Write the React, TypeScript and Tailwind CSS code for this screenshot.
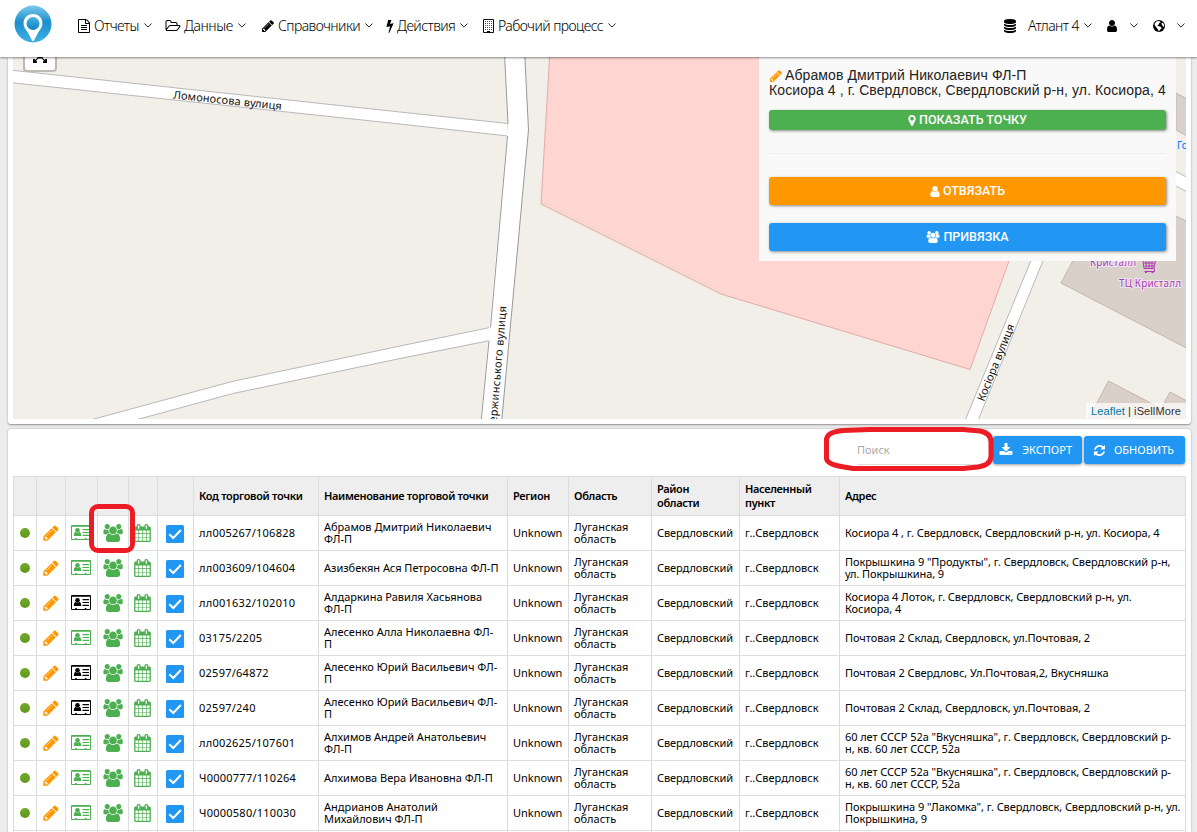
import React from "react";

type IconProps = { d: string; box?: string; className?: string };
const Icon = ({ d, box = "0 0 1792 1792", className = "" }: IconProps) => (
  <svg viewBox={box} className={"shrink-0 fill-current " + className}>
    <path d={d} />
  </svg>
);

const WIDE = "0 0 2048 1792";

const P = {
  file: "M1596 380q28 28 48 76t20 88v1152q0 40-28 68t-68 28h-1344q-40 0-68-28t-28-68v-1600q0-40 28-68t68-28h896q40 0 88 20t76 48zm-444-244v376h376q-10-29-22-41l-313-313q-12-12-41-22zm384 1528v-1024h-416q-40 0-68-28t-28-68v-416h-768v1536h1280zm-1024-864q0-14 9-23t23-9h704q14 0 23 9t9 23v64q0 14-9 23t-23 9h-704q-14 0-23-9t-9-23v-64zm736 224q14 0 23 9t9 23v64q0 14-9 23t-23 9h-704q-14 0-23-9t-9-23v-64q0-14 9-23t23-9h704zm0 256q14 0 23 9t9 23v64q0 14-9 23t-23 9h-704q-14 0-23-9t-9-23v-64q0-14 9-23t23-9h704z",
  folder: "M1845 931q0-35-53-35h-1088q-40 0-85.500 21.500t-71.500 52.500l-294 363q-18 24-18 40 0 35 53 35h1088q40 0 86-22t71-53l294-363q18-22 18-39zm-1141-163h768v-160q0-40-28-68t-68-28h-576q-40 0-68-28t-28-68v-64q0-40-28-68t-68-28h-320q-40 0-68 28t-28 68v853l256-315q44-53 116-87.500t140-34.500zm1269 163q0 62-46 120l-295 363q-43 53-116 87.500t-140 34.500h-1088q-92 0-158-66t-66-158v-960q0-92 66-158t158-66h320q92 0 158 66t66 158v32h544q92 0 158 66t66 158v160h192q54 0 99 24.500t67 70.500q15 32 15 68z",
  pencil: "M491 1536l91-91-235-235-91 91v107h128v128h107zm523-928q0-22-22-22-10 0-17 7l-542 542q-7 7-7 17 0 22 22 22 10 0 17-7l542-542q7-7 7-17zm-54-192l416 416-832 832h-416v-416zm683 96q0 53-37 90l-166 166-416-416 166-165q36-38 90-38 53 0 91 38l235 234q37 39 37 91z",
  bolt: "M1333 566q18 20 7 44l-540 1157q-13 25-42 25-4 0-14-2-17-5-25.500-19t-4.500-30l197-808-406 101q-4 1-12 1-18 0-31-11-18-15-13-39l201-825q4-14 16-23t28-9h328q19 0 32 12.500t13 29.500q0 8-5 18l-171 463 396-98q8-2 12-2 19 0 34 15z",
  database: "M896 768q237 0 443-43t325-127v170q0 69-103 128t-280 93.500-385 34.500-385-34.500-280-93.500-103-128v-170q119 84 325 127t443 43zm0 768q237 0 443-43t325-127v170q0 69-103 128t-280 93.500-385 34.500-385-34.500-280-93.500-103-128v-170q119 84 325 127t443 43zm0-384q237 0 443-43t325-127v170q0 69-103 128t-280 93.500-385 34.500-385-34.500-280-93.500-103-128v-170q119 84 325 127t443 43zm0-1152q208 0 385 34.500t280 93.500 103 128v128q0 69-103 128t-280 93.500-385 34.500-385-34.500-280-93.500-103-128v-128q0-69 103-128t280-93.500 385-34.500z",
  user: "M1536 1399q0 109-62.500 187t-150.500 78h-854q-88 0-150.500-78t-62.500-187q0-85 8.500-160.500t31.500-152 58.500-131 94-89 134.500-34.500q131 128 313 128t313-128q76 0 134.500 34.500t94 89 58.500 131 31.500 152 8.500 160.500zm-256-887q0 159-112.500 271.500t-271.500 112.500-271.500-112.500-112.500-271.500 112.500-271.500 271.500-112.500 271.500 112.500 112.500 271.500z",
  users: "M657 896q-162 5-265 128h-134q-82 0-138-40.500t-56-118.500q0-353 124-353 6 0 43.500 21t97.500 42.500 119 21.500q67 0 133-23-5 37-5 66 0 159 93 290zm1071 637q0 120-73 189.500t-194 69.500h-874q-121 0-194-69.500t-73-189.500q0-53 3.500-103.500t14-109 26.500-108.500 43-97.500 62-81 85.500-53.500 111.500-20q10 0 43 21.500t73 48 107 48 135 21.500 135-21.500 107-48 73-48 43-21.500q61 0 111.500 20t85.500 53.500 62 81 43 97.500 26.500 108.500 14 109 3.500 103.500zm-1024-1277q0 106-75 181t-181 75-181-75-75-181 75-181 181-75 181 75 75 181zm704 384q0 159-112.500 271.500t-271.500 112.500-271.500-112.500-112.500-271.500 112.500-271.500 271.500-112.500 271.500 112.500 112.500 271.500zm576 225q0 78-56 118.500t-138 40.500h-134q-103-123-265-128 93-131 93-290 0-29-5-66 66 23 133 23 59 0 119-21.500t97.500-42.500 43.500-21q124 0 124 353zm-128-609q0 106-75 181t-181 75-181-75-75-181 75-181 181-75 181 75 75 181z",
  calendar: "M192 1664h288v-288h-288v288zm352 0h320v-288h-320v288zm-352-352h288v-320h-288v320zm352 0h320v-320h-320v320zm-352-384h288v-288h-288v288zm736 736h320v-288h-320v288zm-384-736h320v-288h-320v288zm768 736h288v-288h-288v288zm-384-352h320v-320h-320v320zm-352-864v-288q0-13-9.500-22.500t-22.500-9.500h-64q-13 0-22.500 9.500t-9.500 22.500v288q0 13 9.500 22.500t22.500 9.500h64q13 0 22.500-9.500t9.500-22.500zm736 864h288v-320h-288v320zm-384-384h320v-288h-320v288zm384 0h288v-288h-288v288zm32-480v-288q0-13-9.500-22.500t-22.500-9.500h-64q-13 0-22.500 9.500t-9.500 22.500v288q0 13 9.500 22.500t22.500 9.500h64q13 0 22.500-9.500t9.500-22.500zm384-64v1280q0 52-38 90t-90 38h-1408q-52 0-90-38t-38-90v-1280q0-52 38-90t90-38h128v-96q0-66 47-113t113-47h64q66 0 113 47t47 113v96h384v-96q0-66 47-113t113-47h64q66 0 113 47t47 113v96h128q52 0 90 38t38 90z",
  refresh: "M1639 1056q0 5-1 7-64 268-268 434.500t-478 166.500q-146 0-282.500-55t-243.500-157l-129 129q-19 19-45 19t-45-19-19-45v-448q0-26 19-45t45-19h448q26 0 45 19t19 45-19 45l-137 137q71 66 161 102t187 36q134 0 250-65t186-179q11-17 53-117 8-23 30-23h192q13 0 22.500 9.500t9.500 22.500zm25-800v448q0 26-19 45t-45 19h-448q-26 0-45-19t-19-45 19-45l138-138q-148-137-349-137-134 0-250 65t-186 179q-11 17-53 117-8 23-30 23h-199q-13 0-22.500-9.500t-9.500-22.500v-7q65-268 270-434.500t480-166.500q146 0 284 55.500t245 156.500l130-129q19-19 45-19t45 19 19 45z",
  download: "M1344 1344q0-26-19-45t-45-19-45 19-19 45 19 45 45 19 45-19 19-45zm256 0q0-26-19-45t-45-19-45 19-19 45 19 45 45 19 45-19 19-45zm128-224v320q0 40-28 68t-68 28h-1472q-40 0-68-28t-28-68v-320q0-40 28-68t68-28h465l135 136q58 56 136 56t136-56l136-136h464q40 0 68 28t28 68zm-325-569q17 41-14 70l-448 448q-18 19-45 19t-45-19l-448-448q-31-29-14-70 17-39 59-39h256v-448q0-26 19-45t45-19h256q26 0 45 19t19 45v448h256q42 0 59 39z",
  marker: "M1152 640q0-106-75-181t-181-75-181 75-75 181 75 181 181 75 181-75 75-181zm256 0q0 109-33 179l-364 774q-16 33-47.500 52t-67.500 19-67.500-19-46.500-52l-365-774q-33-70-33-179 0-212 150-362t362-150 362 150 150 362z",
};

const Chevron = ({ className = "" }: { className?: string }) => (
  <svg viewBox="0 0 8 5" className={"h-[5px] w-2 shrink-0 fill-none stroke-[#222] stroke-1 " + className}>
    <path d="M.4.5 4 4.100 7.600.5" />
  </svg>
);

const Building = () => (
  <svg viewBox="0 0 11 14" className="h-[14px] w-[11px] shrink-0">
    <path fill="none" stroke="#111" d="M.5.500h10v13H.5z" />
    <path stroke="#555" strokeDasharray="1 1" d="M2 2.500h7M2 4.500h7M2 6.500h7M2 8.500h7M2 10.500h7" />
    <path d="M4 12h3v2H4z" />
  </svg>
);

const Globe = () => (
  <svg viewBox="0 0 24 24" className="size-3 shrink-0">
    <circle cx="12" cy="12" r="12" />
    <path fill="#fff" d="M7.500 2.500 13 1.800l2.500 2.700-3 1.200-.5 3-3.500 1.600 2 1.700 4.500 1.300 2.500 2.500-3 3-2.800 4.200-2-4.500-3.200-4L3 9.500l.8-3zM16.500 7l3.500-1.500 2.300 4.500-.5 4.500-3-3.300z" />
  </svg>
);

const Logo = () => (
  <svg viewBox="0 0 38 38" className="size-[38px] shrink-0">
    <defs>
      <linearGradient id="ring" x1="0" y1="0" x2="0" y2="1">
        <stop offset="0" stopColor="#7cc8ec" />
        <stop offset=".45" stopColor="#1b8fcd" />
        <stop offset="1" stopColor="#3fb0e6" />
      </linearGradient>
      <linearGradient id="core" x1="0" y1="0" x2="0" y2="1">
        <stop offset="0" stopColor="#4ab0e0" />
        <stop offset="1" stopColor="#0a84c6" />
      </linearGradient>
    </defs>
    <circle cx="19" cy="19" r="18.500" fill="url(#ring)" />
    <path fill="#fff" d="M19 9c-5.500 0-9.500 4.200-9.500 9.300 0 3.600 2 6.300 4.300 9.200L18 35.500q1 1.400 2 0l4.200-8c2.300-2.900 4.300-5.600 4.300-9.200C28.500 13.200 24.500 9 19 9z" />
    <circle cx="19" cy="18.500" r="6.500" fill="url(#core)" />
  </svg>
);

const IdCard = ({ className = "" }: { className?: string }) => (
  <svg viewBox="0 0 20 15" className={"h-[15px] w-5 fill-current " + className}>
    <path fillRule="evenodd" d="M1 0h18q1 0 1 1v13q0 1-1 1H1q-1 0-1-1V1q0-1 1-1zM1 1.700v12.300h3.200v-1h1.600v1h8v-1h1.600v1H19V1.700z" />
    <circle cx="6.500" cy="5.300" r="2.300" />
    <path d="M2.800 11q0-4 2-4 1.700 1 3.400 0 2 0 2 4zM11.500 4H18v1.200h-6.500zM11.500 6.900H18v1.200h-6.500zM11.500 9.800H18V11h-6.500z" />
  </svg>
);

const Check = () => (
  <svg viewBox="0 0 18 18" className="size-[18px]">
    <rect width="18" height="18" rx="1.500" fill="#2196f3" />
    <path d="m3.300 9.300 4 3.700 7.500-8" fill="none" stroke="#fff" strokeWidth="2" />
  </svg>
);

const NavItem = ({ icon, label, text = "" }: { icon: React.ReactNode; label: string; text?: string }) => (
  <div className="flex items-center">
    <span className="mr-[3px] flex">{icon}</span>
    <span className={"whitespace-nowrap " + text}>{label}</span>
    <Chevron className="ml-[5px]" />
  </div>
);

const Header = () => (
  <header className="relative z-10 flex h-[57px] shrink-0 items-center bg-white pb-[6px] font-['Noto_Sans',sans-serif] text-[14px] font-[350] tracking-[-0.57px] text-black shadow-[0_1px_2px_rgba(0,0,0,0.45)]">
    <div className="mt-[5px] ml-[14px] flex w-[63px] self-start">
      <Logo />
    </div>
    <nav className="flex">
      <div className="w-[88px]"><NavItem icon={<Icon d={P.file} className="h-[14px] w-[14px]" />} label="Отчеты" /></div>
      <div className="w-[96px]"><NavItem icon={<Icon d={P.folder} box={WIDE} className="h-[14px] w-4" />} label="Данные" text="tracking-[-0.45px]" /></div>
      <div className="w-[125px]"><NavItem icon={<Icon d={P.pencil} className="size-[14px]" />} label="Справочники" /></div>
      <div className="w-[97px]"><NavItem icon={<Icon d={P.bolt} box="448 0 896 1792" className="h-[14px] w-[8px]" />} label="Действия" /></div>
      <NavItem icon={<span className="mr-px flex"><Building /></span>} label="Рабочий процесс" />
    </nav>
    <div className="ml-auto flex items-center pr-[12px]">
      <Icon d={P.database} className="size-[14px]" />
      <span className="ml-[11px] whitespace-nowrap">Атлант 4</span>
      <Chevron className="ml-[5px]" />
      <Icon d={P.user} className="ml-[13px] size-[14px]" />
      <Chevron className="ml-[11px]" />
      <span className="ml-[15px]"><Globe /></span>
      <Chevron className="ml-[12px]" />
    </div>
  </header>
);

const MapDrawing = () => (
  <svg viewBox="13 57 1173 362" className="block h-[362px] w-[1173px] font-['Noto_Sans',sans-serif]">
    <rect x="13" y="57" width="1173" height="362" fill="#f2efe9" />
    <path d="M550 50 541 204 721 294 970 369.500 1014 247V50z" fill="#ffd5d1" stroke="#e3aaa8" />
    <g fill="#d9d0c9" stroke="#c4b6ab">
      <path d="M1083 242 1061 283 1200 355V228L1176 216z" />
      <path d="M1176 93 1200 106V143L1176 130z" />
      <path d="M1108.500 381 1080 435H1160L1164 410zM1170 392 1150 430H1200V408z" />
    </g>
    <path d="M1170 168.500 1200 184V198.500L1170 183z" fill="#fff" stroke="#bbb" />
    <g fill="#fff" stroke="#b8b8b8">
      <path d="M5 69.500 400 112 508 123.500V136L400 124 5 82z" />
      <path d="M495 326.500 400 346 232 381.500 85 421.500 130 421.500 233 393.500 400 358.500 495 339.500z" />
      <path d="M1048 219 964 423H977L1060 219z" />
    </g>
    <path d="M504 50 508 125 480.500 423H501.500L528.500 130 524.500 50z" fill="#fff" />
    <path d="M504.300 50 508 123.500M507.500 136 490.500 327.500M489 340.500 481 423M524.500 50 528.500 130 501.500 423" fill="none" stroke="#999" />
    <g fontSize="11" fill="#111">
      <text transform="translate(173 98.500) rotate(6)" textLength="109">Ломоносова вулиця</text>
      <text transform="translate(495.500 437) rotate(-85.200)" textLength="131">Дзержинського вулиця</text>
      <text transform="translate(984 402) rotate(-68)" textLength="82">Косіора вулиця</text>
    </g>
    <g fontSize="10" fill="#a03cac" stroke="#f2e6f0" strokeWidth="2" paintOrder="stroke">
      <text x="1090" y="265.500" textLength="46">Кристалл</text>
      <text x="1119" y="287" textLength="62">ТЦ Кристалл</text>
    </g>
    <text x="1177" y="149" fontSize="10" fill="#0078ff">Го</text>
    <path d="M1143 260.500h12.500l-1.700 8h-9.800zM1144.500 271.500h10" fill="none" stroke="#ac39ac" />
    <path d="M1144 263h11M1144.500 266h10M1146 260v8M1149 260v8M1152 260v8M1154.500 268.500v3" stroke="#ac39ac" />
    <path d="M1145 271h2v2h-2zM1151.500 271h2v2h-2z" fill="#ac39ac" />
  </svg>
);

const PanelButton = ({ icon, label, className }: { icon: React.ReactNode; label: string; className: string }) => (
  <button className={"flex w-full items-center justify-center gap-[3px] rounded-[3px] font-['Roboto',sans-serif] text-[12.500px] font-medium text-white shadow-[1px_1px_3px_rgba(0,0,0,0.45)] " + className}>
    {icon}
    <span>{label}</span>
  </button>
);

const PointPanel = () => (
  <div className="absolute top-0 right-[10px] h-[204px] w-[417px] bg-[#f9f9f9] px-[10px] pt-[11px] font-['Liberation_Sans',Arial,sans-serif]">
    <div className="text-[14px] leading-[15px] whitespace-nowrap text-[#222]">
      <div className="flex items-center gap-[2px] tracking-[0.1px]">
        <Icon d={P.pencil} className="size-[14px] text-[#ff9800]" />
        Абрамов Дмитрий Николаевич ФЛ-П
      </div>
      <div className="tracking-[0.1px]">Косиора 4 , г. Свердловск, Свердловский р-н, ул. Косиора, 4</div>
    </div>
    <PanelButton className="mt-[12px] h-5 bg-[#4caf50]" icon={<Icon d={P.marker} box="384 0 1024 1792" className="h-[13px] w-[8px]" />} label="ПОКАЗАТЬ ТОЧКУ" />
    <div className="mt-[23px] h-px bg-[#ececec]" />
    <PanelButton className="mt-[23px] h-7 bg-[#ff9800]" icon={<Icon d={P.user} box="256 0 1280 1792" className="h-[13px] w-[10px]" />} label="ОТВЯЗАТЬ" />
    <PanelButton className="mt-[18px] h-7 bg-[#2196f3]" icon={<Icon d={P.users} box={WIDE} className="h-[12px] w-[14px]" />} label="ПРИВЯЗКА" />
  </div>
);

const MapCard = () => (
  <section className="ml-2 h-[367px] w-[1183px] shrink-0 rounded-b-[3px] bg-white px-[5px] shadow-[0_1px_2px_rgba(0,0,0,0.4)]">
    <div className="relative h-[362px] overflow-hidden">
      <MapDrawing />
      <div className="absolute -top-[14px] left-[10px] flex h-[29px] w-[34px] items-end justify-center rounded-[4px] border-2 border-[#bdbab4] bg-white pb-[7px]">
        <svg viewBox="0 0 14 7" className="h-[7px] w-[14px]">
          <path d="M0 3h1.500l1 1 2-2.500L4 0h6l-.5 1.500L11.500 4l1-1H14v4h-4V5.700l.8-.7L9 2.500H5L3.200 5l.8.7V7H0z" />
        </svg>
      </div>
      <PointPanel />
      <div className="absolute right-0 bottom-0 flex h-4 w-[100px] items-center justify-center bg-white/70 font-['Liberation_Sans',Arial,sans-serif] text-[11px] tracking-[0.1px] whitespace-pre text-[#333]">
        <span className="text-[#0078a8]">Leaflet</span> | iSellMore
      </div>
    </div>
  </section>
);

type Row = { code: string; name: string[]; address: string[]; dark?: boolean };
const rows: Row[] = [
  { code: "лл005267/106828", name: ["Абрамов Дмитрий Николаевич", "ФЛ-П"], address: ["Косиора 4 , г. Свердловск, Свердловский р-н, ул. Косиора, 4"] },
  { code: "лл003609/104604", name: ["Азизбекян Ася Петросовна ФЛ-П"], address: ['Покрышкина 9 "Продукты", г. Свердловск, Свердловский р-н,', "ул. Покрышкина, 9"] },
  { code: "лл001632/102010", name: ["Алдаркина Равиля Хасьянова", "ФЛ-П"], address: ["Косиора 4 Лоток, г. Свердловск, Свердловский р-н, ул.", "Косиора, 4"], dark: true },
  { code: "03175/2205", name: ["Алесенко Алла Николаевна ФЛ-", "П"], address: ["Почтовая 2 Склад, Свердловск, ул.Почтовая, 2"] },
  { code: "02597/64872", name: ["Алесенко Юрий Васильевич ФЛ-", "П"], address: ["Почтовая 2 Свердловс, Ул.Почтовая,2, Вкусняшка"], dark: true },
  { code: "02597/240", name: ["Алесенко Юрий Васильевич ФЛ-", "П"], address: ["Почтовая 2 Склад, Свердловск, ул.Почтовая, 2"], dark: true },
  { code: "лл002625/107601", name: ["Алхимов Андрей Анатольевич", "ФЛ-П"], address: ['60 лет СССР 52а "Вкусняшка", г. Свердловск, Свердловский р-', "н, кв. 60 лет СССР, 52а"] },
  { code: "Ч0000777/110264", name: ["Алхимова Вера Ивановна ФЛ-П"], address: ['60 лет СССР 52а "Вкусняшка", г. Свердловск, Свердловский р-', "н, кв. 60 лет СССР, 52а"] },
  { code: "Ч0000580/110030", name: ["Андрианов Анатолий", "Михайлович ФЛ-П"], address: ['Покрышкина 9 "Лакомка", г. Свердловск, Свердловский р-н, ул.', "Покрышкина, 9"] },
];

const headings = [["Код торговой точки"], ["Наименование торговой точки"], ["Регион"], ["Область"], ["Район", "области"], ["Населенный", "пункт"], ["Адрес"]];

const COLS = "grid grid-cols-[23px_29px_32px_31px_29px_36px_125px_189px_61px_83px_88px_100px_347px] ";
const CELL = "flex flex-col justify-center border-t border-l border-[#dcdcdc] last:border-r ";

const TextCell = ({ lines, className = "leading-[12px]" }: { lines: string[]; className?: string }) => (
  <div className={CELL + "overflow-hidden pl-[5px] whitespace-nowrap " + className}>
    {lines.map((line, i) => (
      <div key={i}>{line}</div>
    ))}
  </div>
);

const IconCell = ({ children, className = "" }: { children?: React.ReactNode; className?: string }) => (
  <div className={CELL + "items-center " + className}>{children}</div>
);

const PointRow = ({ row }: { row: Row }) => (
  <div className={COLS + "h-[35px] shrink-0"}>
    <IconCell><span className="size-[10px] rounded-full bg-linear-to-b from-[#74a82c] to-[#5f9a1a]" /></IconCell>
    <IconCell className="pr-px pb-px"><Icon d={P.pencil} className="size-[18px] text-[#ff9800]" /></IconCell>
    <IconCell className="pr-px pb-[2px]"><IdCard className={row.dark ? "text-black" : "text-[#4caf50]"} /></IconCell>
    <IconCell className="pb-px"><Icon d={P.users} box="64 0 1920 1792" className="h-[18px] w-5 text-[#4caf50]" /></IconCell>
    <IconCell className="pr-px pb-px"><Icon d={P.calendar} box="64 0 1664 1792" className="h-[18px] w-[17px] text-[#4caf50]" /></IconCell>
    <IconCell className="pt-px pr-[2px]"><Check /></IconCell>
    <TextCell lines={[row.code]} className="tracking-[0.25px]" />
    <TextCell lines={row.name} />
    <TextCell lines={["Unknown"]} />
    <TextCell lines={["Луганская", "область"]} />
    <TextCell lines={["Свердловский"]} className="tracking-[-0.08px]" />
    <TextCell lines={["г..Свердловск"]} />
    <TextCell lines={row.address} className="leading-[12px] tracking-[-0.07px]" />
  </div>
);

const ActionButton = ({ icon, label, className }: { icon: React.ReactNode; label: string; className: string }) => (
  <button className={"flex h-7 items-center rounded-[3px] bg-[#2196f3] text-[11px] whitespace-nowrap text-white shadow-[0_1px_3px_rgba(0,0,0,0.4)] " + className}>
    {icon}
    {label}
  </button>
);

const TableCard = () => (
  <section className="relative mt-[5px] ml-2 flex w-[1183px] grow flex-col rounded-t-[3px] bg-white px-[5px] font-['Noto_Sans',sans-serif] text-[11px] text-black shadow-[0_0_2px_rgba(0,0,0,0.35)]">
    <div className="flex h-[47px] shrink-0 items-start justify-end pt-[7px]">
      <div className="mr-[15px] h-[29px] w-[121px] border-b border-[#ddd] leading-[28px] text-[#aaa]">Поиск</div>
      <ActionButton className="mr-[2px] w-[89px] gap-[9px] pl-[6px]" icon={<Icon d={P.download} className="size-[14px]" />} label="ЭКСПОРТ" />
      <ActionButton className="mr-px w-[101px] gap-[8px] pl-[9px]" icon={<Icon d={P.refresh} className="size-[13px]" />} label="ОБНОВИТЬ" />
    </div>
    <div className={COLS + "h-[39px] shrink-0 bg-[#eee] font-semibold tracking-[-0.33px]"}>
      {Array.from({ length: 6 }, (_, i) => <IconCell key={i} />)}
      {headings.map((lines) => <TextCell key={lines[0]} lines={lines} className="leading-[14px]" />)}
    </div>
    {rows.map((row) => <PointRow key={row.code} row={row} />)}
    <div className={COLS + "grow"}>{Array.from({ length: 13 }, (_, c) => <IconCell key={c} />)}</div>
    <svg viewBox="0 0 172 44" className="pointer-events-none absolute -top-[2px] left-[815px] h-[44px] w-[172px]">
      <path d="M20 3.500 46 2.500H140L157 4Q168 6 168 15V29Q168 38 155 40L140 41.500H30L18 39.500Q3.500 37 3.500 31V13Q3.500 5 20 3.500z" fill="none" stroke="#ed1c24" strokeWidth="5" />
    </svg>
    <div className="pointer-events-none absolute top-[75px] left-[81px] h-[49px] w-[46px] rounded-[9px] border-[5px] border-[#ed1c24]" />
  </section>
);

export default function App() {
  return (
    <div className="flex h-[832px] w-[1197px] flex-col overflow-hidden bg-[#ececec]">
      <Header />
      <MapCard />
      <TableCard />
    </div>
  );
}
